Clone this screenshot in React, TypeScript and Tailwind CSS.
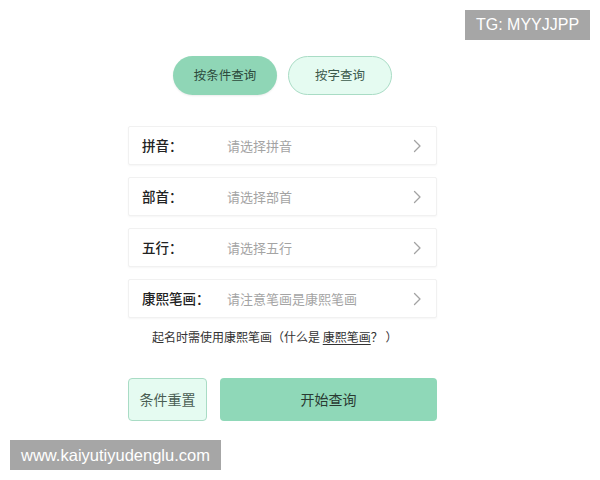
import React from "react";

const rows = [
  { label: "拼音：", placeholder: "请选择拼音" },
  { label: "部首：", placeholder: "请选择部首" },
  { label: "五行：", placeholder: "请选择五行" },
  { label: "康熙笔画：", placeholder: "请注意笔画是康熙笔画" },
];

function Chevron() {
  return (
    <svg width="9" height="14" viewBox="0 0 9 14" fill="none">
      <path d="M1.5 1.5 L7 7 L1.5 12.5" stroke="#a3a3a3" strokeWidth="1.3" strokeLinecap="round" strokeLinejoin="round" />
    </svg>
  );
}

export default function App() {
  return (
    <div
      className="relative w-[600px] h-[480px] bg-white overflow-hidden"
      style={{ fontFamily: '"Noto Sans CJK SC", "Noto Sans", sans-serif' }}
    >
      <div className="ml-[128px] w-[309px] pt-[56px] flex flex-col">
        <div className="flex justify-center gap-[11px]">
          <div className="w-[104px] h-[39px] rounded-full bg-[#8fd6b6] flex items-center justify-center text-[12.5px] text-[#2d4a3c] shadow-[0_1px_2px_rgba(0,0,0,0.08)]">
            按条件查询
          </div>
          <div className="w-[104px] h-[39px] rounded-full bg-[#e5fbf1] border border-[#a9dcc5] flex items-center justify-center text-[12.5px] text-[#3c5a4c]">
            按字查询
          </div>
        </div>

        <div className="mt-[31px] flex flex-col gap-[12px]">
          {rows.map((r) => (
            <div
              key={r.label}
              className="h-[39px] bg-white border border-[#f1f1f1] rounded-[2px] shadow-[0_1px_2px_rgba(0,0,0,0.04)] flex items-center pl-[13px] pr-[14px]"
            >
              <span className="w-[85px] text-[13.5px] font-medium text-[#222]">{r.label}</span>
              <span className="flex-1 text-[13px] text-[#a4a4a4]">{r.placeholder}</span>
              <Chevron />
            </div>
          ))}
        </div>

        <div className="mt-[9px] h-[20px] flex items-center pl-[24px] text-[12px] text-[#333]">
          <span>起名时需使用康熙笔画（什么是&nbsp;</span>
          <span className="underline underline-offset-2">康熙笔画</span>
          <span>？&nbsp;）</span>
        </div>

        <div className="mt-[31px] flex gap-[13px]">
          <div className="w-[79px] h-[43px] rounded-[4px] bg-[#e5fbf1] border border-[#a9dcc5] flex items-center justify-center text-[14px] text-[#4a5e54]">
            条件重置
          </div>
          <div className="flex-1 h-[43px] rounded-[4px] bg-[#8fd8b8] flex items-center justify-center text-[14px] text-[#2a3a32]">
            开始查询
          </div>
        </div>
      </div>

      <div
        className="absolute left-[465px] top-[10px] w-[125px] h-[30px] bg-[#a6a6a6] text-white text-[16px] flex items-center justify-center"
        style={{ fontFamily: '"Liberation Sans", Arial, sans-serif' }}
      >
        TG: MYYJJPP
      </div>
      <div
        className="absolute left-[10px] top-[440px] w-[211px] h-[30px] bg-[#a6a6a6] text-white text-[16.5px] flex items-center justify-center"
        style={{ fontFamily: '"Liberation Sans", Arial, sans-serif' }}
      >
        www.kaiyutiyudenglu.com
      </div>
    </div>
  );
}
